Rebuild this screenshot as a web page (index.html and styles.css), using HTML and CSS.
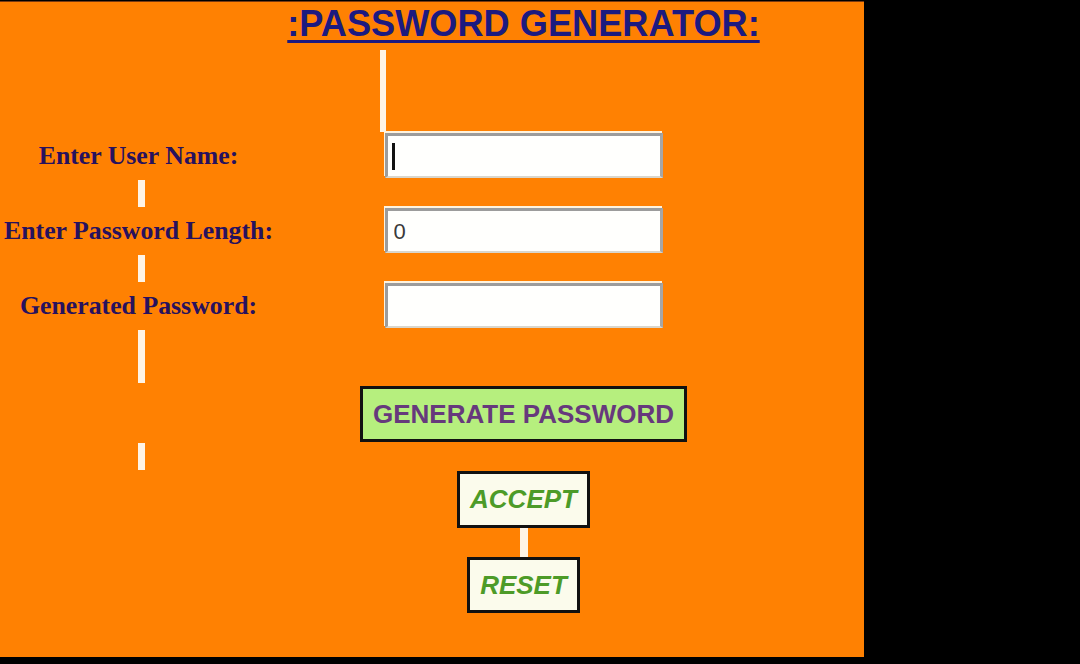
FILE: index.html
```html
<!DOCTYPE html>
<html>
<head>
<meta charset="utf-8">
<title>Password Generator</title>
<link rel="stylesheet" href="styles.css">
</head>
<body>
<div class="page">
  <div class="row title-row">
    <div class="left"></div>
    <div class="right"><h1 class="title">:PASSWORD GENERATOR:</h1></div>
  </div>
  <div class="row spacer-top">
    <div class="left"></div>
    <div class="right"><div class="field-slot"><div class="vbar tall"></div></div></div>
  </div>
  <div class="row field-row">
    <div class="left"><label class="label">Enter User Name:</label></div>
    <div class="right"><div class="field-slot"><input class="field" type="text" value=""><span class="caret"></span></div></div>
  </div>
  <div class="row gap-row g30"><div class="left"><div class="lbar h27"></div></div><div class="right"></div></div>
  <div class="row field-row">
    <div class="left"><label class="label">Enter Password Length:</label></div>
    <div class="right"><div class="field-slot"><input class="field" type="text" value="0"></div></div>
  </div>
  <div class="row gap-row g30"><div class="left"><div class="lbar h27"></div></div><div class="right"></div></div>
  <div class="row field-row">
    <div class="left"><label class="label">Generated Password:</label></div>
    <div class="right"><div class="field-slot"><input class="field" type="text" value=""></div></div>
  </div>
  <div class="row gap-row g58"><div class="left"><div class="lbar h53"></div></div><div class="right"></div></div>
  <div class="row btn-row">
    <div class="left"></div>
    <div class="right"><button class="btn btn-gen">GENERATE PASSWORD</button></div>
  </div>
  <div class="row gap-row g29"><div class="left"><div class="lbar h27 t1"></div></div><div class="right"></div></div>
  <div class="row btn-row">
    <div class="left"></div>
    <div class="right"><button class="btn btn-alt">ACCEPT</button></div>
  </div>
  <div class="row conn-row">
    <div class="left"></div>
    <div class="right"><div class="conn"></div></div>
  </div>
  <div class="row btn-row">
    <div class="left"></div>
    <div class="right"><button class="btn btn-alt">RESET</button></div>
  </div>
</div>
</body>
</html>
```
FILE: styles.css
```css
html, body {
  margin: 0;
  padding: 0;
  background: #000;
}
body {
  width: 1080px;
  height: 664px;
  overflow: hidden;
}
.page {
  margin-top: 2px;
  width: 864px;
  height: 655px;
  background: #ff8102;
  display: flex;
  flex-direction: column;
  box-shadow: 0 -1px 0 #7a3a10;
}
.row {
  display: grid;
  grid-template-columns: 277px 493px;
}
.left, .right {
  display: flex;
  align-items: center;
}
.left { justify-content: center; }
.right { justify-content: center; }

.title-row { height: 48px; }
.title-row .right { align-items: flex-start; }
.title {
  margin: 0;
  font-family: "Liberation Sans", Arial, sans-serif;
  font-weight: bold;
  font-size: 36.2px;
  line-height: 44px;
  color: #1c1a80;
  text-decoration: underline;
  text-decoration-thickness: 3px;
  text-underline-offset: 4px;
  white-space: nowrap;
}

.spacer-top { height: 83px; }
.spacer-top .right { align-items: stretch; }
.field-slot {
  width: 278px;
  position: relative;
  display: flex;
}
.vbar.tall {
  width: 6px;
  height: 82px;
  margin-left: -5px;
  background: #fff4e6;
}

.field-row { height: 45px; }
.label {
  font-family: "Liberation Serif", "Times New Roman", serif;
  font-weight: bold;
  font-size: 25.8px;
  color: #27115e;
  white-space: nowrap;
  margin-top: 1px;
}
.field {
  box-sizing: border-box;
  width: 278px;
  height: 45px;
  margin: 0;
  padding: 2px 6px 0;
  background: #fffffd;
  border-style: solid;
  border-width: 3px 3px 2px 3px;
  border-color: #9c9c9c #a6a6a6 #d9d6cc #9c9c9c;
  box-shadow: -1px -2px 0 #fff3de;
  font-family: "Liberation Sans", Arial, sans-serif;
  font-size: 22px;
  color: #3a3a3a;
  outline: none;
}
.caret {
  position: absolute;
  left: 7px;
  top: 10px;
  width: 3px;
  height: 27px;
  background: #111;
}

.gap-row .left { justify-content: flex-start; align-items: flex-start; }
.lbar {
  width: 7px;
  margin-left: 138px;
  margin-top: 2px;
  background: #fff4e6;
}
.lbar.t1 { margin-top: 1px; }
.g30 { height: 30px; }
.g58 { height: 58px; }
.g29 { height: 29px; }
.h27 { height: 27px; }
.h53 { height: 53px; }

.btn-row { height: 56px; }
.g29 + .btn-row { height: 57px; }
.btn {
  box-sizing: border-box;
  height: 100%;
  margin: 0;
  padding: 0 10px;
  border: 3px solid #111;
  font-family: "Liberation Sans", Arial, sans-serif;
  font-weight: bold;
  font-size: 26px;
  white-space: nowrap;
  cursor: pointer;
}
.btn-gen {
  background: #b6ef7e;
  color: #66397c;
}
.btn-alt {
  background: #fbfbec;
  color: #4d9b28;
  font-style: italic;
}

.conn-row { height: 29px; }
.conn-row .right { align-items: stretch; }
.conn {
  width: 8px;
  background: #fff4e6;
}
```
